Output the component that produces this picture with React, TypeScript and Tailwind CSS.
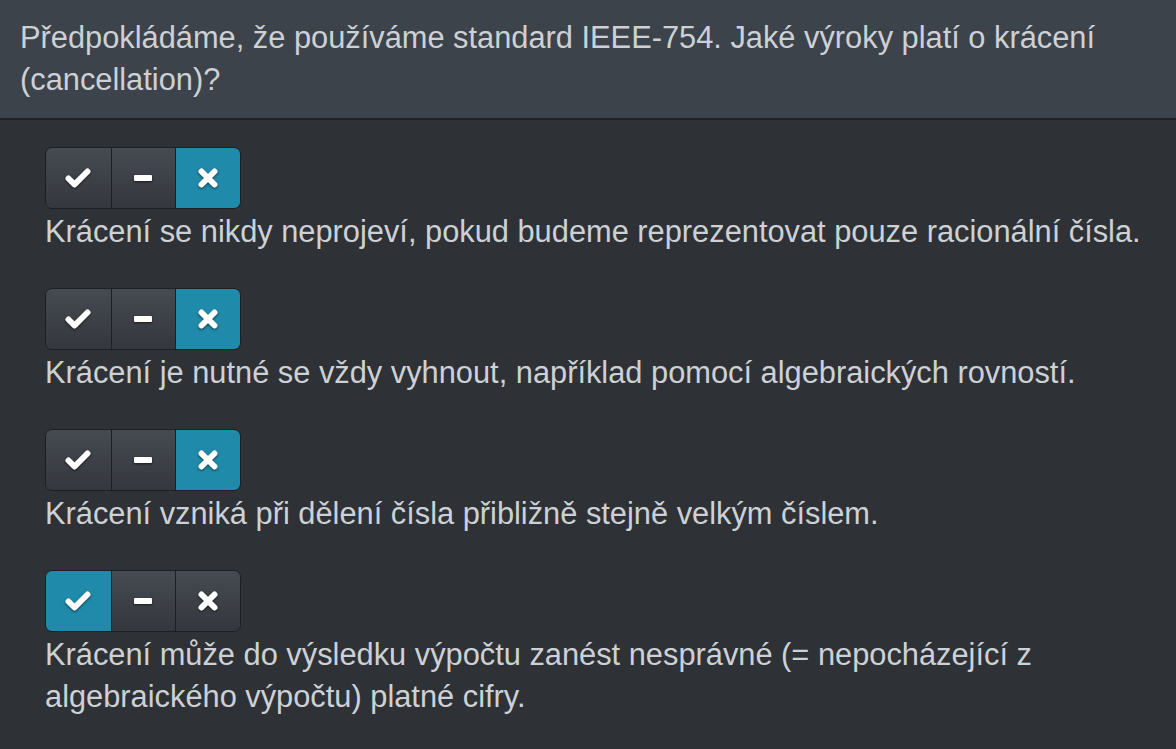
const items = [
  { text: 'Krácení se nikdy neprojeví, pokud budeme reprezentovat pouze racionální čísla.', value: 'no' },
  { text: 'Krácení je nutné se vždy vyhnout, například pomocí algebraických rovností.', value: 'no' },
  { text: 'Krácení vzniká při dělení čísla přibližně stejně velkým číslem.', value: 'no' },
  { text: 'Krácení může do výsledku výpočtu zanést nesprávné (= nepocházející z algebraického výpočtu) platné cifry.', value: 'yes' },
]

function CheckIcon() {
  return (
    <svg width="26" height="22" viewBox="0 0 26 22" className="drop-shadow-[0_1px_1px_rgba(0,0,0,0.6)]">
      <path d="M3.5 11.5 L9.5 17.5 L22.5 4.5" fill="none" stroke="white" strokeWidth="6" strokeLinejoin="round" strokeLinecap="round" />
    </svg>
  )
}

function MinusIcon() {
  return (
    <svg width="20" height="8" viewBox="0 0 20 8" className="drop-shadow-[0_1px_1px_rgba(0,0,0,0.6)]">
      <rect x="1" y="1" width="18" height="6" rx="1" fill="white" />
    </svg>
  )
}

function TimesIcon() {
  return (
    <svg width="22" height="22" viewBox="0 0 22 22" className="drop-shadow-[0_1px_1px_rgba(0,0,0,0.6)]">
      <path d="M4.5 4.5 L17.5 17.5 M17.5 4.5 L4.5 17.5" fill="none" stroke="white" strokeWidth="6" strokeLinecap="round" />
    </svg>
  )
}

function Toggle({ value }: { value: string }) {
  const base = 'w-[65px] h-full flex items-center justify-center'
  const idle = 'bg-gradient-to-b from-[#464a51] to-[#34383e]'
  const active = 'bg-[#1f8aa9]'
  return (
    <div className="flex h-[62px] w-[196px] overflow-hidden rounded-[7px] border border-[#1c1f23]">
      <div className={`${base} ${value === 'yes' ? active : idle}`}>
        <CheckIcon />
      </div>
      <div className={`${base} border-l border-[#1c1f23] ${value === 'skip' ? active : idle}`}>
        <MinusIcon />
      </div>
      <div className={`${base} border-l border-[#1c1f23] ${value === 'no' ? active : idle}`}>
        <TimesIcon />
      </div>
    </div>
  )
}

export default function App() {
  return (
    <div className="min-h-[749px] w-[1176px] bg-[#2e3236] font-['Liberation_Sans',Arial,sans-serif] text-[#cdd1d5] text-[30.8px] leading-[42px]">
      <div className="bg-[#3d434b] border-b-2 border-[#1f2226] px-[20px] py-[17px]">
        Předpokládáme, že používáme standard IEEE-754. Jaké výroky platí o krácení (cancellation)?
      </div>
      <div className="flex flex-col gap-[35px] pl-[45px] pr-[20px] pt-[27px]">
        {items.map((item, i) => (
          <div key={i} className="flex flex-col gap-[2px]">
            <Toggle value={item.value} />
            <div>{item.text}</div>
          </div>
        ))}
      </div>
    </div>
  )
}
